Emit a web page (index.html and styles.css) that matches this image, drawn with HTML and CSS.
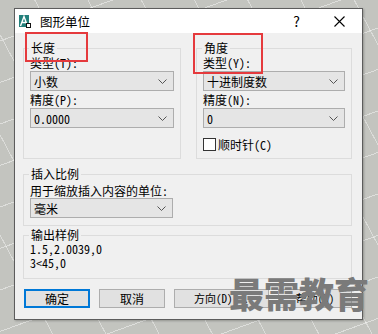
FILE: index.html
```html
<!DOCTYPE html>
<html lang="zh-CN">
<head>
    <meta charset="UTF-8">
    <title>图形单位</title>
    <link rel="stylesheet" href="styles.css">
</head>
<body>
    <div class="dialog">
        <div class="titlebar">
            <svg class="app-icon" width="12" height="13" viewBox="0 0 12 13">
                <rect x="0" y="0" width="10" height="12" fill="#23807b"/>
                <path d="M1.5 11 L5 1.5 L8.5 11 M3 7.5 H7" stroke="#fff" stroke-width="1.4" fill="none"/>
                <rect x="7.5" y="8.5" width="4" height="4" fill="#fff" stroke="#111" stroke-width="1"/>
            </svg>
            <span class="title">图形单位</span>
            <span class="help">?</span>
            <svg class="close" width="11" height="11" viewBox="0 0 11 11">
                <path d="M0.5 0.5 L10.5 10.5 M10.5 0.5 L0.5 10.5" stroke="#000" stroke-width="1.1"/>
            </svg>
        </div>

        <div class="content">
            <div class="top-row">
                <fieldset class="group">
                    <legend>长度</legend>
                    <div class="field-label">类型(T):</div>
                    <div class="select"><span>小数</span><svg class="chevron" width="9" height="5" viewBox="0 0 9 5"><path d="M0.5 0.5 L4.5 4.5 L8.5 0.5" stroke="#555" fill="none"/></svg></div>
                    <div class="field-label second">精度(P):</div>
                    <div class="select"><span>0.0000</span><svg class="chevron" width="9" height="5" viewBox="0 0 9 5"><path d="M0.5 0.5 L4.5 4.5 L8.5 0.5" stroke="#555" fill="none"/></svg></div>
                </fieldset>

                <fieldset class="group">
                    <legend>角度</legend>
                    <div class="field-label">类型(Y):</div>
                    <div class="select"><span>十进制度数</span><svg class="chevron" width="9" height="5" viewBox="0 0 9 5"><path d="M0.5 0.5 L4.5 4.5 L8.5 0.5" stroke="#555" fill="none"/></svg></div>
                    <div class="field-label second">精度(N):</div>
                    <div class="select"><span>0</span><svg class="chevron" width="9" height="5" viewBox="0 0 9 5"><path d="M0.5 0.5 L4.5 4.5 L8.5 0.5" stroke="#555" fill="none"/></svg></div>
                    <div class="check-row">
                        <span class="checkbox"></span>
                        <span>顺时针(C)</span>
                    </div>
                </fieldset>
            </div>

            <fieldset class="group insert">
                <legend>插入比例</legend>
                <div class="field-label">用于缩放插入内容的单位:</div>
                <div class="select short"><span>毫米</span><svg class="chevron" width="9" height="5" viewBox="0 0 9 5"><path d="M0.5 0.5 L4.5 4.5 L8.5 0.5" stroke="#555" fill="none"/></svg></div>
            </fieldset>

            <fieldset class="group sample">
                <legend>输出样例</legend>
                <div class="sample-text">1.5,2.0039,0</div>
                <div class="sample-text">3&lt;45,0</div>
            </fieldset>

            <div class="buttons">
                <button class="btn primary">确定</button>
                <button class="btn">取消</button>
                <button class="btn wide small">方向(D)...</button>
                <button class="btn help-btn small">帮助(H)</button>
            </div>
        </div>

        <div class="mark mark-length"></div>
        <div class="mark mark-angle"></div>
        <div class="watermark">最需教育</div>
    </div>
</body>
</html>
```

FILE: styles.css
```css
* {
    margin: 0;
    padding: 0;
    box-sizing: border-box;
}

body {
    height: 334px;
    overflow: hidden;
    font-family: "Noto Sans Mono CJK SC", "Noto Sans CJK SC", sans-serif;
    font-size: 12px;
    color: #000;
    background-color: #c3c4bf;
    background-image:
        repeating-linear-gradient(160deg, transparent 0 38px, rgba(255,255,255,0.45) 38px 39px),
        repeating-linear-gradient(62deg, transparent 0 46px, rgba(255,255,255,0.4) 46px 47px);
}

/* Dialog window */
.dialog {
    position: relative;
    width: 349px;
    height: 312px;
    margin: 8px 0 0 14px;
    background-color: #f0f0f0;
    border: 1px solid #5c5c5c;
    box-shadow: 1px 1px 2px rgba(0,0,0,0.25);
}

.titlebar {
    display: flex;
    align-items: center;
    height: 24px;
    background-color: #fff;
    padding-left: 4px;
}

.app-icon {
    margin-right: 9px;
}

.title {
    flex-grow: 1;
    font-family: "Noto Sans CJK SC", sans-serif;
    font-size: 12.5px;
}

.help {
    font-family: "Noto Sans CJK SC", sans-serif;
    font-size: 14px;
    margin-right: 34px;
}

.close {
    margin-right: 17px;
}

/* Content */
.content {
    padding: 8px 10px 0 8px;
}

.top-row {
    display: grid;
    grid-template-columns: 158px 156px;
    column-gap: 15px;
}

.group {
    min-width: 0;
    border: 1px solid #dcdcdc;
    padding: 0 6px 7px 6px;
}

.group legend {
    margin-left: -1px;
    padding: 0 2px;
    line-height: 14px;
}

.field-label {
    line-height: 16px;
}

.field-label.second {
    margin-top: 1px;
}

.select {
    display: flex;
    align-items: center;
    justify-content: space-between;
    height: 20px;
    padding: 0 6px 0 3px;
    background-color: #e5e5e5;
    border: 1px solid #adadad;
}

.select.short {
    width: 143px;
}

.check-row {
    display: flex;
    align-items: center;
    gap: 2px;
    margin-top: 10px;
    line-height: 13px;
}

.checkbox {
    width: 13px;
    height: 13px;
    background-color: #fff;
    border: 1px solid #333;
}

.insert {
    margin-top: 8px;
}

.insert .field-label {
    line-height: 14px;
    margin-top: 3px;
}

.sample {
    margin-top: 2px;
    padding-bottom: 8px;
}

.sample-text {
    line-height: 14px;
}

/* Buttons */
.buttons {
    display: flex;
    gap: 9px;
    margin-top: 10px;
    padding-left: 1px;
}

.btn {
    width: 66px;
    height: 19px;
    font-family: inherit;
    font-size: 12px;
    line-height: 15px;
    background-color: #e1e1e1;
    border: 1px solid #adadad;
    color: #000;
}

.btn.primary {
    border: 2px solid #0078d7;
}

.btn.wide {
    width: 95px;
}

.btn.help-btn {
    width: 74px;
}

.btn.small {
    font-size: 11px;
}

/* Annotations over the dialog */
.mark {
    position: absolute;
    border: 2px solid #e53a3d;
}

.mark-length {
    left: 10px;
    top: 23px;
    width: 63px;
    height: 30px;
}

.mark-angle {
    left: 178px;
    top: 24px;
    width: 70px;
    height: 41px;
}

.watermark {
    position: absolute;
    left: 214px;
    top: 266px;
    font-family: "Noto Sans CJK SC", sans-serif;
    font-size: 35px;
    font-weight: 900;
    line-height: 1;
    color: #7a7a7a;
    white-space: nowrap;
}
```
